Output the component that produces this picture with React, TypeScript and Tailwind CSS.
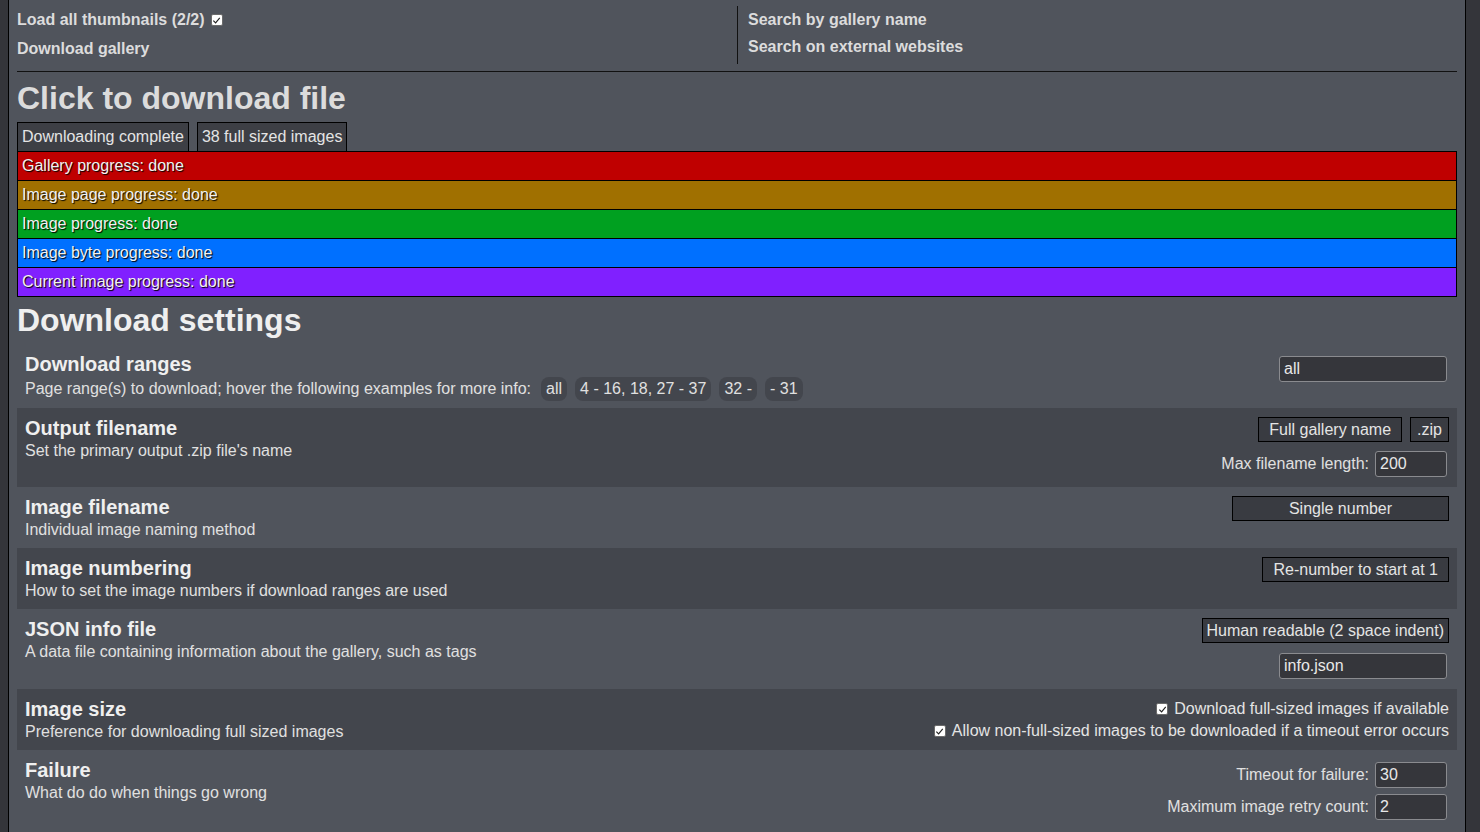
import React from "react";

const font = { fontFamily: '"Liberation Sans", Arial, sans-serif' };

function Check() {
  return (
    <span className="inline-flex items-center justify-center w-[12px] h-[12px] bg-white border border-[#6b6b6b] rounded-[2px] shrink-0">
      <svg viewBox="0 0 10 10" className="w-[9px] h-[9px]">
        <path d="M1.5 5.2 L4 7.6 L8.6 2.2" fill="none" stroke="#222" strokeWidth="1.3" />
      </svg>
    </span>
  );
}

function Btn({ children, pad = "px-[10px]", className = "" }: { children: React.ReactNode; pad?: string; className?: string }) {
  return (
    <div
      className={
        "h-[25px] flex items-center justify-center bg-[#393b41] border border-black text-[16px] text-[#e4e4e4] " +
        pad +
        " " +
        className
      }
    >
      {children}
    </div>
  );
}

function Field({ value, width }: { value: string; width: string }) {
  return (
    <div
      className={
        "h-[26px] my-[3px] mr-[2px] flex items-center px-[4px] bg-[#35363b] border border-[#8a8b8f] rounded-[3px] text-[16px] text-[#e8e8e8] " +
        width
      }
    >
      {value}
    </div>
  );
}

function Row({
  title,
  desc,
  dark,
  children,
}: {
  title: string;
  desc: React.ReactNode;
  dark?: boolean;
  children: React.ReactNode;
}) {
  return (
    <div className={"flex justify-between px-2 pt-[9px] pb-[7px] " + (dark ? "bg-[#43464d]" : "")}>
      <div>
        <div className="text-[20px] leading-[23px] font-bold text-[#efefef]">{title}</div>
        <div className="text-[16px] leading-[22px] text-[#e0e0e0]">{desc}</div>
      </div>
      <div className="flex flex-col items-end">{children}</div>
    </div>
  );
}

const bars = [
  { label: "Gallery progress: done", color: "bg-[#bf0000]" },
  { label: "Image page progress: done", color: "bg-[#a07000]" },
  { label: "Image progress: done", color: "bg-[#00a020]" },
  { label: "Image byte progress: done", color: "bg-[#0070ff]" },
  { label: "Current image progress: done", color: "bg-[#8020ff]" },
];

export default function App() {
  return (
    <div className="min-h-screen bg-[#34353a] pl-2 pr-[14px]" style={font}>
      <div className="bg-[#50545c] border-x border-black px-2 pt-[6px] min-h-[832px]">
        {/* top links */}
        <div className="grid grid-cols-2">
          <div className="text-[16px] font-bold text-[#dcdcdc]">
            <div className="h-[28px] flex items-center gap-[6px]">
              Load all thumbnails (2/2) <Check />
            </div>
            <div className="h-[30px] flex items-center">Download gallery</div>
          </div>
          <div className="border-l border-[#111] pl-[10px] text-[16px] font-bold text-[#dcdcdc]">
            <div className="h-[27px] flex items-center">Search by gallery name</div>
            <div className="h-[27px] flex items-center">Search on external websites</div>
          </div>
        </div>
        <div className="mt-[7px] border-t border-[#111]" />

        <h2 className="mt-[8px] mb-[5px] text-[32px] leading-[37px] font-bold text-[#dcdcdc]">
          Click to download file
        </h2>

        <div className="flex gap-[8px]">
          <div className="h-[29px] flex items-center px-[4px] border border-b-0 border-black bg-[#3d3f45] text-[16px] text-[#e4e4e4]">
            Downloading complete
          </div>
          <div className="h-[29px] flex items-center px-[4px] border border-b-0 border-black bg-[#3d3f45] text-[16px] text-[#e4e4e4]">
            38 full sized images
          </div>
        </div>
        <div className="border border-black">
          {bars.map((b, i) => (
            <div
              key={b.label}
              className={
                "flex items-center px-[4px] text-[16px] text-[#f2f2f2] [text-shadow:1px_1px_1px_#000] " +
                b.color +
                (i < bars.length - 1 ? " h-[29px] border-b border-black" : " h-[28px]")
              }
            >
              {b.label}
            </div>
          ))}
        </div>

        <h2 className="mt-[5px] mb-[5px] text-[32px] leading-[37px] font-bold text-[#efefef]">
          Download settings
        </h2>

        <Row
          title="Download ranges"
          desc={
            <div className="flex items-center h-[25px] gap-[8px]">
              <span className="mr-[2px]">Page range(s) to download; hover the following examples for more info:</span>
              <span className="h-[24px] flex items-center px-[5px] rounded-[8px] bg-[#43464d]">all</span>
              <span className="h-[24px] flex items-center px-[5px] rounded-[8px] bg-[#43464d]">4 - 16, 18, 27 - 37</span>
              <span className="h-[24px] flex items-center px-[5px] rounded-[8px] bg-[#43464d]">32 -</span>
              <span className="h-[24px] flex items-center px-[5px] rounded-[8px] bg-[#43464d]">- 31</span>
            </div>
          }
        >
          <Field value="all" width="w-[168px]" />
        </Row>

        <Row title="Output filename" desc="Set the primary output .zip file's name" dark>
          <div className="flex gap-[8px] mb-[6px]">
            <Btn>Full gallery name</Btn>
            <Btn pad="px-[6px]">.zip</Btn>
          </div>
          <div className="flex items-center gap-[6px] text-[16px] text-[#e0e0e0]">
            Max filename length:
            <Field value="200" width="w-[72px]" />
          </div>
        </Row>

        <Row title="Image filename" desc="Individual image naming method">
          <Btn className="w-[217px]">Single number</Btn>
        </Row>

        <Row title="Image numbering" desc="How to set the image numbers if download ranges are used" dark>
          <Btn>Re-number to start at 1</Btn>
        </Row>

        <Row title="JSON info file" desc="A data file containing information about the gallery, such as tags">
          <Btn pad="px-[4px]" className="mb-[7px]">Human readable (2 space indent)</Btn>
          <Field value="info.json" width="w-[168px]" />
        </Row>

        <Row title="Image size" desc="Preference for downloading full sized images" dark>
          <div className="h-[22px] flex items-center gap-[6px] text-[16px] text-[#e4e4e4]">
            <Check /> Download full-sized images if available
          </div>
          <div className="h-[22px] flex items-center gap-[6px] text-[16px] text-[#e4e4e4]">
            <Check /> Allow non-full-sized images to be downloaded if a timeout error occurs
          </div>
        </Row>

        <Row title="Failure" desc="What do do when things go wrong">
          <div className="flex items-center gap-[6px] text-[16px] text-[#e0e0e0]">
            Timeout for failure:
            <Field value="30" width="w-[72px]" />
          </div>
          <div className="flex items-center gap-[6px] text-[16px] text-[#e0e0e0]">
            Maximum image retry count:
            <Field value="2" width="w-[72px]" />
          </div>
        </Row>
      </div>
    </div>
  );
}
